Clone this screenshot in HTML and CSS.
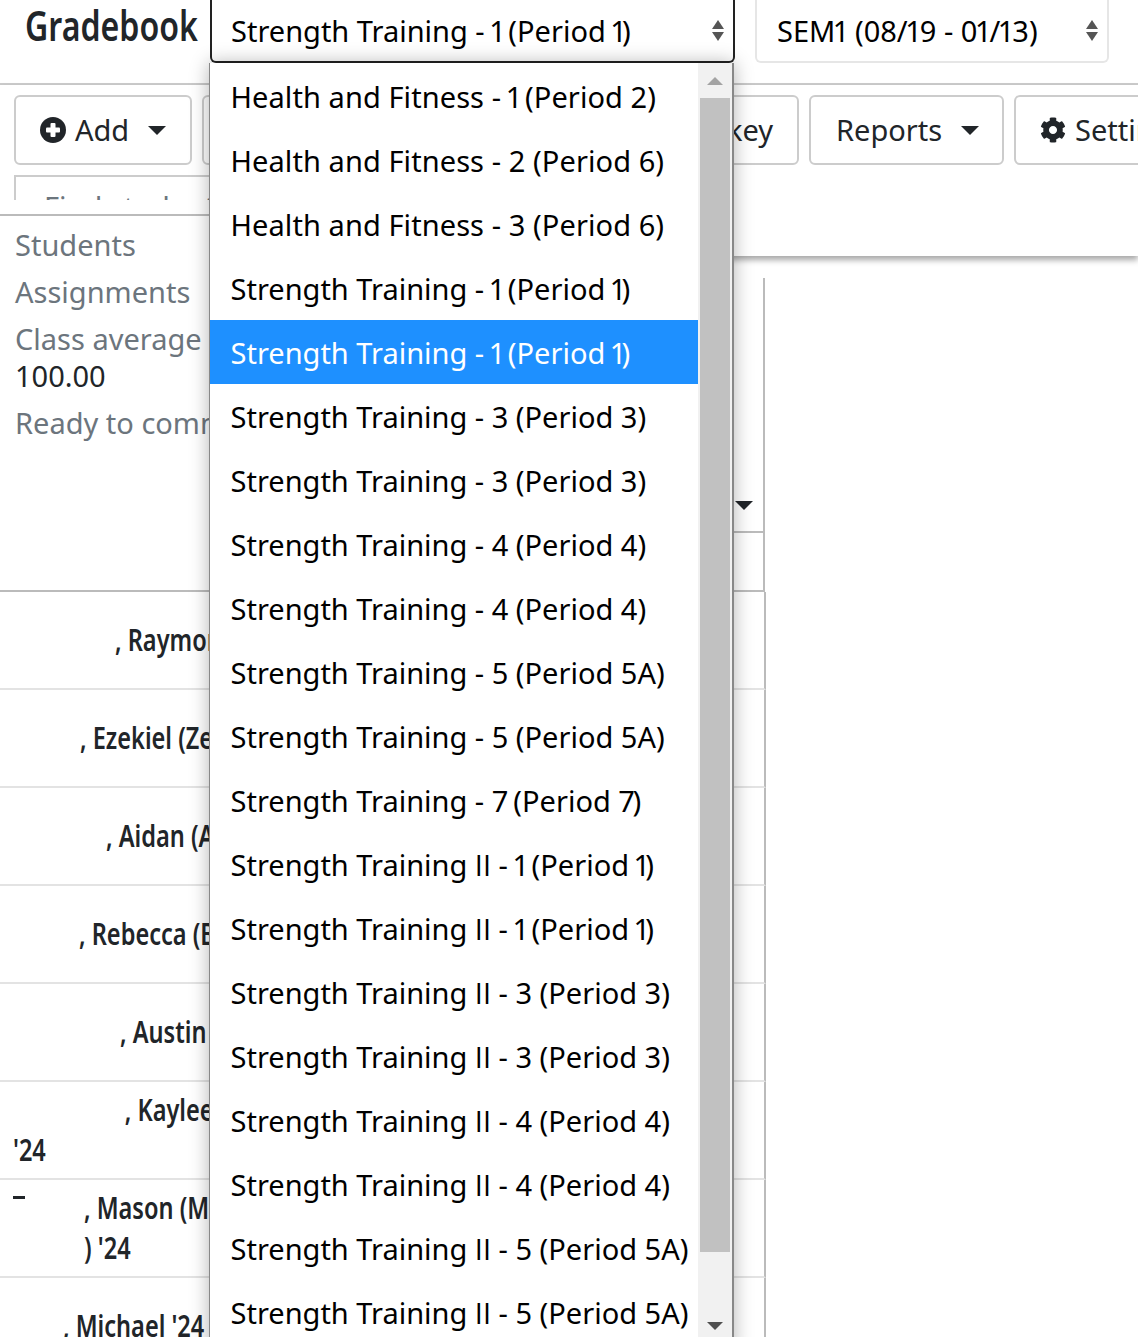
FILE: index.html
```html
<!DOCTYPE html>
<html lang="en">
<head>
<meta charset="utf-8">
<title>Gradebook</title>
<link rel="stylesheet" href="styles.css">
</head>
<body>
<div class="page">
  <header class="topbar">
    <h1 class="title"><span class="condensed">Gradebook</span></h1>
    <div class="select select-course">
      <span>Strength Training - <span class="one">1</span> (Period <span class="one">1</span>)</span>
      <span class="updown"><i class="up"></i><i class="down"></i></span>
    </div>
    <div class="select select-term">
      <span>SEM<span class="one-t">1</span> (08/<span class="one-t">1</span>9 - 0<span class="one-t">1</span>/<span class="one-t">1</span>3)</span>
      <span class="updown"><i class="up"></i><i class="down"></i></span>
    </div>
  </header>

  <section class="toolbar">
    <div class="buttons">
      <div class="btn btn-add">
        <svg class="icon" viewBox="0 0 26 26"><circle cx="13" cy="13" r="13" fill="#212529"/><rect x="6" y="10.5" width="14" height="5" rx="1" fill="#fff"/><rect x="10.5" y="6" width="5" height="14" rx="1" fill="#fff"/></svg>
        <span>Add</span><i class="caret"></i>
      </div>
      <div class="btn btn-key"><span>Color key</span></div>
      <div class="btn btn-reports"><span>Reports</span><i class="caret"></i></div>
      <div class="btn btn-settings">
        <svg class="icon" viewBox="0 0 512 512"><path fill="#212529" d="M487.4 315.7l-42.6-24.6c4.3-23.2 4.3-47 0-70.2l42.6-24.6c4.9-2.8 7.1-8.6 5.5-14-11.1-35.6-30-67.8-54.7-94.6-3.8-4.1-10-5.1-14.8-2.3L380.8 110c-17.9-15.4-38.5-27.3-60.8-35.1V25.8c0-5.6-3.9-10.5-9.4-11.7-36.7-8.2-74.3-7.8-109.2 0-5.5 1.2-9.4 6.1-9.4 11.7V75c-22.2 7.9-42.8 19.8-60.8 35.1L88.7 85.5c-4.9-2.8-11-1.9-14.8 2.3-24.7 26.7-43.6 58.9-54.7 94.6-1.7 5.4.6 11.2 5.5 14L67.3 221c-4.3 23.2-4.3 47 0 70.2l-42.6 24.6c-4.9 2.8-7.1 8.6-5.5 14 11.1 35.6 30 67.8 54.7 94.6 3.8 4.1 10 5.1 14.8 2.3l42.6-24.6c17.9 15.4 38.5 27.3 60.8 35.1v49.2c0 5.6 3.9 10.5 9.4 11.7 36.7 8.2 74.3 7.8 109.2 0 5.5-1.2 9.4-6.1 9.4-11.7v-49.2c22.2-7.9 42.8-19.8 60.8-35.1l42.6 24.6c4.9 2.8 11 1.9 14.8-2.3 24.7-26.7 43.6-58.9 54.7-94.6 1.5-5.5-.7-11.3-5.6-14.1zM256 336c-44.1 0-80-35.9-80-80s35.9-80 80-80 80 35.9 80 80-35.9 80-80 80z"/></svg>
        <span>Settings</span>
      </div>
    </div>
    <div class="find-clip"><div class="find-box">Find student</div></div>
  </section>

  <section class="grid">
    <div class="grid-head">
      <div class="grid-head-main"><i class="caret caret-col"></i></div>
      <div class="grid-head-sub"></div>
    </div>
    <div class="row"><span class="name n1">, Raymond</span></div>
    <div class="row"><span class="name n2">, Ezekiel (Zeke)</span></div>
    <div class="row"><span class="name n3">, Aidan (Aid)</span></div>
    <div class="row"><span class="name n4">, Rebecca (Becca)</span></div>
    <div class="row"><span class="name n5">, Austin</span></div>
    <div class="row"><span class="name n6"><span class="indent-k">, Kaylee</span><br>'24</span></div>
    <div class="row"><i class="remnant"></i><span class="name n7">, Mason (Mason<br>) '24</span></div>
    <div class="row"><span class="name n8">, Michael '24</span></div>
  </section>

  <aside class="stats">
    <div class="stat">Students</div>
    <div class="stat">Assignments</div>
    <div class="stat stat-avg">Class average<div class="stat-value">100.00</div></div>
    <div class="stat">Ready to commit</div>
  </aside>

  <div class="menu">
    <ul class="menu-list">
      <li class="wide">Health and Fitness - <span class="one">1</span> (Period 2)</li>
      <li class="wide">Health and Fitness - 2 (Period 6)</li>
      <li class="wide">Health and Fitness - 3 (Period 6)</li>
      <li>Strength Training - <span class="one">1</span> (Period <span class="one">1</span>)</li>
      <li class="selected">Strength Training - <span class="one">1</span> (Period <span class="one">1</span>)</li>
      <li>Strength Training - 3 (Period 3)</li>
      <li>Strength Training - 3 (Period 3)</li>
      <li>Strength Training - 4 (Period 4)</li>
      <li>Strength Training - 4 (Period 4)</li>
      <li>Strength Training - 5 (Period 5A)</li>
      <li>Strength Training - 5 (Period 5A)</li>
      <li>Strength Training - <span class="seven">7</span> (Period <span class="seven">7</span>)</li>
      <li>Strength Training <span class="roman">II</span> - <span class="one">1</span> (Period <span class="one">1</span>)</li>
      <li>Strength Training <span class="roman">II</span> - <span class="one">1</span> (Period <span class="one">1</span>)</li>
      <li>Strength Training <span class="roman">II</span> - 3 (Period 3)</li>
      <li>Strength Training <span class="roman">II</span> - 3 (Period 3)</li>
      <li>Strength Training <span class="roman">II</span> - 4 (Period 4)</li>
      <li>Strength Training <span class="roman">II</span> - 4 (Period 4)</li>
      <li>Strength Training <span class="roman">II</span> - 5 (Period 5A)</li>
      <li>Strength Training <span class="roman">II</span> - 5 (Period 5A)</li>
    </ul>
    <div class="scrollbar">
      <i class="sb-up"></i>
      <div class="sb-thumb"></div>
      <i class="sb-down"></i>
    </div>
  </div>
</div>
</body>
</html>
```
FILE: styles.css
```css
* { box-sizing: border-box; }
html, body { margin: 0; padding: 0; height: 100%; }
body { background: #fff; color: #212529; font-family: "Noto Sans", "Open Sans", sans-serif; overflow: hidden; }
.page { position: relative; width: 1138px; height: 1337px; overflow: hidden; font-size: 29px; }
.one { letter-spacing: -5px; margin-left: -3px; }
.one-t { letter-spacing: -2px; margin-left: -2.5px; }
.seven { letter-spacing: -2.5px; }
.wide { letter-spacing: .08px; }
.roman { font-family: "Open Sans", sans-serif; }

/* top bar */
.topbar { display: flex; align-items: flex-start; height: 85px; border-bottom: 2px solid #ccc; }
.title { margin: 0; width: 210px; padding: 0 0 0 25px; font-size: 42px; line-height: 50px; font-weight: 600; white-space: nowrap; }
.condensed { display: inline-block; transform: scaleX(.765); transform-origin: left center; }
.select { display: flex; align-items: center; justify-content: space-between; height: 74px; margin-top: -11px; padding: 11px 9px 0 19px; color: #000; background: #fff; border-radius: 0 0 6px 6px; white-space: nowrap; }
.select-course { width: 525px; border: 2px solid #222; border-top: 0; }
.select-term { width: 354px; margin-left: 20px; border: 2px solid #e6e6e6; border-top: 0; padding-left: 20px; padding-right: 9px; }
.updown { display: flex; flex-direction: column; gap: 3px; }
.up, .down { display: block; width: 0; height: 0; border-left: 6.5px solid transparent; border-right: 6.5px solid transparent; }
.up { border-bottom: 9px solid #555; }
.down { border-top: 9px solid #555; }

/* toolbar */
.toolbar { height: 171px; padding: 10px 0 0 14px; background: #fff; box-shadow: 0 4px 6px rgba(0,0,0,.35); position: relative; }
.buttons { display: flex; gap: 10px; width: 1300px; }
.btn { display: flex; align-items: center; height: 70px; padding-bottom: 2px; border: 2px solid #ccc; border-radius: 6px; color: #212529; white-space: nowrap; flex: none; }
.btn-add { width: 178px; padding-left: 24px; }
.btn-key { width: 597px; justify-content: flex-end; padding-right: 24px; }
.btn-reports { width: 195px; padding-left: 25px; }
.btn-settings { width: 200px; padding-left: 24px; }
.icon { width: 26px; height: 26px; margin: 2px 9px 0 0; flex: none; }
.caret { display: inline-block; width: 0; height: 0; border-left: 9px solid transparent; border-right: 9px solid transparent; border-top: 9px solid #212529; margin: 2px 0 0 19px; }
.find-clip { height: 25px; margin-top: 10px; overflow: hidden; }
.find-box { width: 500px; height: 70px; border: 2px solid #ccc; padding: 10px 0 0 28px; color: #6c757d; }

/* grid */
.grid { width: 766px; }
.grid-head { width: 765px; height: 314px; margin-top: 22px; border-right: 2px solid #bbb; border-bottom: 2px solid #bbb; }
.grid-head-main { position: relative; height: 255px; border-bottom: 2px solid #bbb; }
.caret-col { position: absolute; left: 735px; top: 223px; margin: 0; }
.row { position: relative; display: flex; align-items: center; height: 98px; padding-bottom: 3px; border-right: 2px solid #bbb; border-bottom: 2px solid #e3e3e3; font-size: 31px; line-height: 40px; font-weight: 600; color: #212529; white-space: nowrap; }
.name { display: block; transform: scaleX(.76); transform-origin: left center; }
.n1 { margin-left: 115px; }
.n2 { margin-left: 80px; }
.n3 { margin-left: 106px; }
.n4 { margin-left: 79px; }
.n5 { margin-left: 120px; }
.n6 { margin-left: 13px; }
.indent-k { margin-left: 147px; }
.n7 { margin-left: 84px; }
.n8 { margin-left: 63px; }
.remnant { position: absolute; left: 13px; top: 16px; width: 12px; height: 3px; background: #212529; }

/* stats column */
.stats { position: absolute; left: 0; top: 214px; width: 230px; height: 378px; background: #fff; border-top: 2px solid #bbb; border-bottom: 2px solid #bbb; padding: 11px 0 0 15px; color: #6c757d; white-space: nowrap; line-height: 36px; }
.stat { margin-bottom: 11px; }
.stat-value { color: #212529; margin-top: 1px; }

/* open dropdown */
.menu { position: absolute; left: 209px; top: 63px; width: 525px; height: 1290px; display: flex; background: #fff; border-left: 1px solid #888; border-right: 2px solid #888; box-shadow: 0 0 18px rgba(0,0,0,.3); }
.menu-list { list-style: none; margin: 0; padding: 1px 0 0; width: 488px; flex: none; }
.menu-list li { height: 64px; line-height: 66px; padding-left: 20.5px; color: #000; white-space: nowrap; }
.menu-list .selected { background: #1e90ff; color: #fff; }
.scrollbar { position: relative; width: 34px; flex: none; background: #f1f1f1; }
.sb-thumb { position: absolute; left: 2px; right: 2px; top: 35px; height: 1154px; background: #c1c1c1; }
.sb-up, .sb-down { position: absolute; left: 9px; width: 0; height: 0; border-left: 8px solid transparent; border-right: 8px solid transparent; }
.sb-up { top: 14px; border-bottom: 8px solid #a3a3a3; }
.sb-down { top: 1259px; border-top: 8px solid #505050; }
```
